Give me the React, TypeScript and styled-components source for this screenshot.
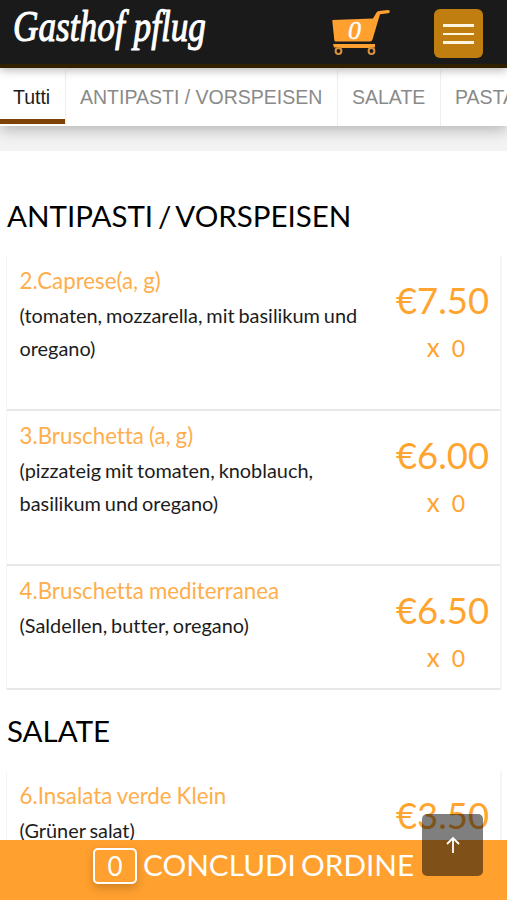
import React from "react";
import styled, { createGlobalStyle } from "styled-components";

const GlobalStyle = createGlobalStyle`
  * { box-sizing: border-box; }
  html, body { margin: 0; padding: 0; height: 900px; overflow: hidden; background: #fff; }
  body { font-family: Lato, "Open Sans", sans-serif; font-variant-ligatures: none; color: #111; }
  button { font: inherit; border: 0; padding: 0; margin: 0; }
  h1, h2, h3, p { margin: 0; font-weight: 400; }
`;

const Page = styled.div`
  display: flex;
  flex-direction: column;
  width: 507px;
  height: 900px;
  overflow: hidden;
  position: relative;
`;

const Header = styled.header`
  display: flex;
  align-items: flex-start;
  flex: none;
  height: 68px;
  background: #1a1a1a;
  border-bottom: 4px solid #302000;
  box-shadow: 0 2px 9px rgba(0, 0, 0, 0.3);
  z-index: 2;
`;

const Logo = styled.svg`
  display: block;
  margin-left: 8px;
  width: 204px;
  height: 64px;
  overflow: visible;
`;

const LogoText = styled.text`
  font-family: "Liberation Serif", serif;
  font-style: italic;
  font-weight: 400;
  font-size: 45px;
  fill: #fff;
  stroke: #fff;
  stroke-width: 1.1px;
  stroke-linejoin: round;
`;

const CartButton = styled.button`
  margin: 8px 0 0 118px;
  width: 64px;
  height: 50px;
  background: none;
  svg { display: block; }
`;

const CartCount = styled.text`
  font-family: "Liberation Serif", serif;
  font-style: italic;
  font-size: 26px;
  fill: #fff;
  stroke: #fff;
  stroke-width: 0.4px;
`;

const MenuButton = styled.button`
  display: flex;
  flex-direction: column;
  align-items: center;
  gap: 6px;
  margin: 9px 0 0 40px;
  padding-top: 15px;
  width: 49px;
  height: 49px;
  border-radius: 6px;
  background: #c07d10;
`;

const MenuBar = styled.span<{ $thick?: boolean }>`
  width: 31px;
  height: ${(p) => (p.$thick ? 3 : 2.5)}px;
  background: #fff4e0;
`;

const Tabs = styled.nav`
  display: flex;
  flex: none;
  height: 58px;
  padding-top: 3px;
  background: #fff;
  box-shadow: 0 4px 14px rgba(0, 0, 0, 0.26);
  z-index: 1;
`;

const Tab = styled.a<{ $width: number; $active?: boolean }>`
  flex: none;
  width: ${(p) => p.$width}px;
  height: ${(p) => (p.$active ? 53 : 55)}px;
  padding: 0 0 0 14px;
  line-height: 52px;
  font-family: "Liberation Sans", Arial, sans-serif;
  font-size: 19.5px;
  white-space: nowrap;
  color: ${(p) => (p.$active ? "#1c1c1c" : "#8a8a8a")};
  border-right: 1px solid #eceeef;
  ${(p) => p.$active && "padding-left: 13px; box-shadow: inset 0 -5px #7d4306;"}
`;

const Strip = styled.div`
  flex: none;
  height: 25px;
  background: #f3f3f3;
`;

const Menu = styled.main`
  padding: 45px 5px 0 6px;
`;

const Category = styled.section`
  padding-bottom: 21px;
`;

const CategoryTitle = styled.h2`
  height: 60px;
  padding-left: 1px;
  line-height: 39px;
  font-size: 29.5px;
  word-spacing: -2.6px;
  color: #000;
`;

const Dish = styled.article<{ $height: number }>`
  display: flex;
  justify-content: space-between;
  height: ${(p) => p.$height}px;
  padding: 8px 12px 0 12.5px;
  border: solid #f5f5f5;
  border-width: 0 2px 0 1px;
  box-shadow: inset 0 -2px #e8e8e8;
`;

const DishText = styled.div`
  width: 350px;
`;

const DishName = styled.h3`
  line-height: 33px;
  font-size: 22.3px;
  word-spacing: -0.7px;
  color: #ffae4c;
`;

const DishDetails = styled.p`
  margin-top: 2px;
  line-height: 33.4px;
  font-size: 19.9px;
  word-spacing: -1.2px;
  color: #1c1c1c;
`;

const DishCost = styled.div`
  display: flex;
  flex-direction: column;
  align-items: flex-end;
  color: #ffa42f;
`;

const Price = styled.span`
  margin-top: 11px;
  margin-right: -1px;
  line-height: 50px;
  font-size: 36.4px;
`;

const Quantity = styled.span`
  display: flex;
  gap: 12px;
  margin-top: 8px;
  padding-right: 23px;
  line-height: 30px;
  font-size: 23px;
`;

const Times = styled.span`
  font-size: 26px;
  line-height: 28px;
`;

const OrderBar = styled.button`
  position: absolute;
  left: 0;
  bottom: 0;
  width: 507px;
  height: 60px;
  display: flex;
  align-items: flex-start;
  gap: 6px;
  padding: 8px 0 0 93px;
  background: #ffa02f;
  color: #fff;
  font-size: 29.7px;
  line-height: 34px;
  word-spacing: -2.4px;
  white-space: nowrap;
`;

const OrderCount = styled.span`
  width: 44px;
  height: 36px;
  border: 2px solid #fff;
  border-radius: 5px;
  line-height: 33px;
  font-size: 26px;
  text-align: center;
  box-shadow: 0 4px 8px rgba(100, 60, 0, 0.3);
`;

const TopButton = styled.button`
  position: absolute;
  left: 422px;
  top: 814px;
  display: flex;
  align-items: center;
  justify-content: center;
  width: 61px;
  height: 62px;
  border-radius: 5px;
  background: rgba(0, 0, 0, 0.5);
`;

const CartIcon = ({ count }: { count: number }) => (
  <svg width="64" height="50" viewBox="0 0 64 50">
    <path
      d="M2.5 12L43 10.5L46.5 4.5Q47.3 3.2 49 3L58 2Q59.8 2 59.8 3.5Q59.8 5 58 5.2L50 6.2L42.5 31.5Q41.8 33.5 40 33.5H6Q4.5 33.5 4.3 32L2.3 13Z"
      fill="#ffa02f"
    />
    <path d="M3 36H45V39.5H42.5L39 40H12L9 39.5H4Z" fill="#ffa02f" />
    <circle cx="8.5" cy="43" r="2.9" fill="none" stroke="#d8913d" strokeWidth="2" />
    <circle cx="41.5" cy="43" r="2.9" fill="none" stroke="#d8913d" strokeWidth="2" />
    <CartCount x="18" y="31">{count}</CartCount>
  </svg>
);

const tabs = [
  { label: "Tutti", width: 66, active: true },
  { label: "ANTIPASTI / VORSPEISEN", width: 272 },
  { label: "SALATE", width: 103 },
  { label: "PASTA", width: 110 },
];

const categories = [
  {
    title: "ANTIPASTI / VORSPEISEN",
    dishes: [
      { name: "2.Caprese(a, g)", details: "(tomaten, mozzarella, mit basilikum und oregano)", price: "€7.50", height: 155 },
      { name: "3.Bruschetta (a, g)", details: "(pizzateig mit tomaten, knoblauch, basilikum und oregano)", price: "€6.00", height: 155 },
      { name: "4.Bruschetta mediterranea", details: "(Saldellen, butter, oregano)", price: "€6.50", height: 124 },
    ],
  },
  {
    title: "SALATE",
    dishes: [{ name: "6.Insalata verde Klein", details: "(Grüner salat)", price: "€3.50", height: 155 }],
  },
];

export default function App() {
  return (
    <Page>
      <GlobalStyle />
      <Header>
        <Logo viewBox="0 0 204 64" aria-label="Gasthof pflug">
          <LogoText x="5" y="41" textLength="193" lengthAdjust="spacingAndGlyphs">Gasthof pflug</LogoText>
        </Logo>
        <CartButton aria-label="Cart"><CartIcon count={0} /></CartButton>
        <MenuButton aria-label="Menu">
          <MenuBar />
          <MenuBar />
          <MenuBar $thick />
        </MenuButton>
      </Header>
      <Tabs>
        {tabs.map((t) => (
          <Tab key={t.label} $width={t.width} $active={t.active}>{t.label}</Tab>
        ))}
      </Tabs>
      <Strip />
      <Menu>
        {categories.map((c) => (
          <Category key={c.title}>
            <CategoryTitle>{c.title}</CategoryTitle>
            {c.dishes.map((d) => (
              <Dish key={d.name} $height={d.height}>
                <DishText>
                  <DishName>{d.name}</DishName>
                  <DishDetails>{d.details}</DishDetails>
                </DishText>
                <DishCost>
                  <Price>{d.price}</Price>
                  <Quantity><Times>x</Times><span>0</span></Quantity>
                </DishCost>
              </Dish>
            ))}
          </Category>
        ))}
      </Menu>
      <OrderBar>
        <OrderCount>0</OrderCount>
        CONCLUDI ORDINE
      </OrderBar>
      <TopButton aria-label="Back to top">
        <svg width="16" height="18" viewBox="0 0 16 18" fill="none" stroke="#fff" strokeWidth="1.8">
          <path d="M8 17V2M2 8L8 2L14 8" />
        </svg>
      </TopButton>
    </Page>
  );
}
